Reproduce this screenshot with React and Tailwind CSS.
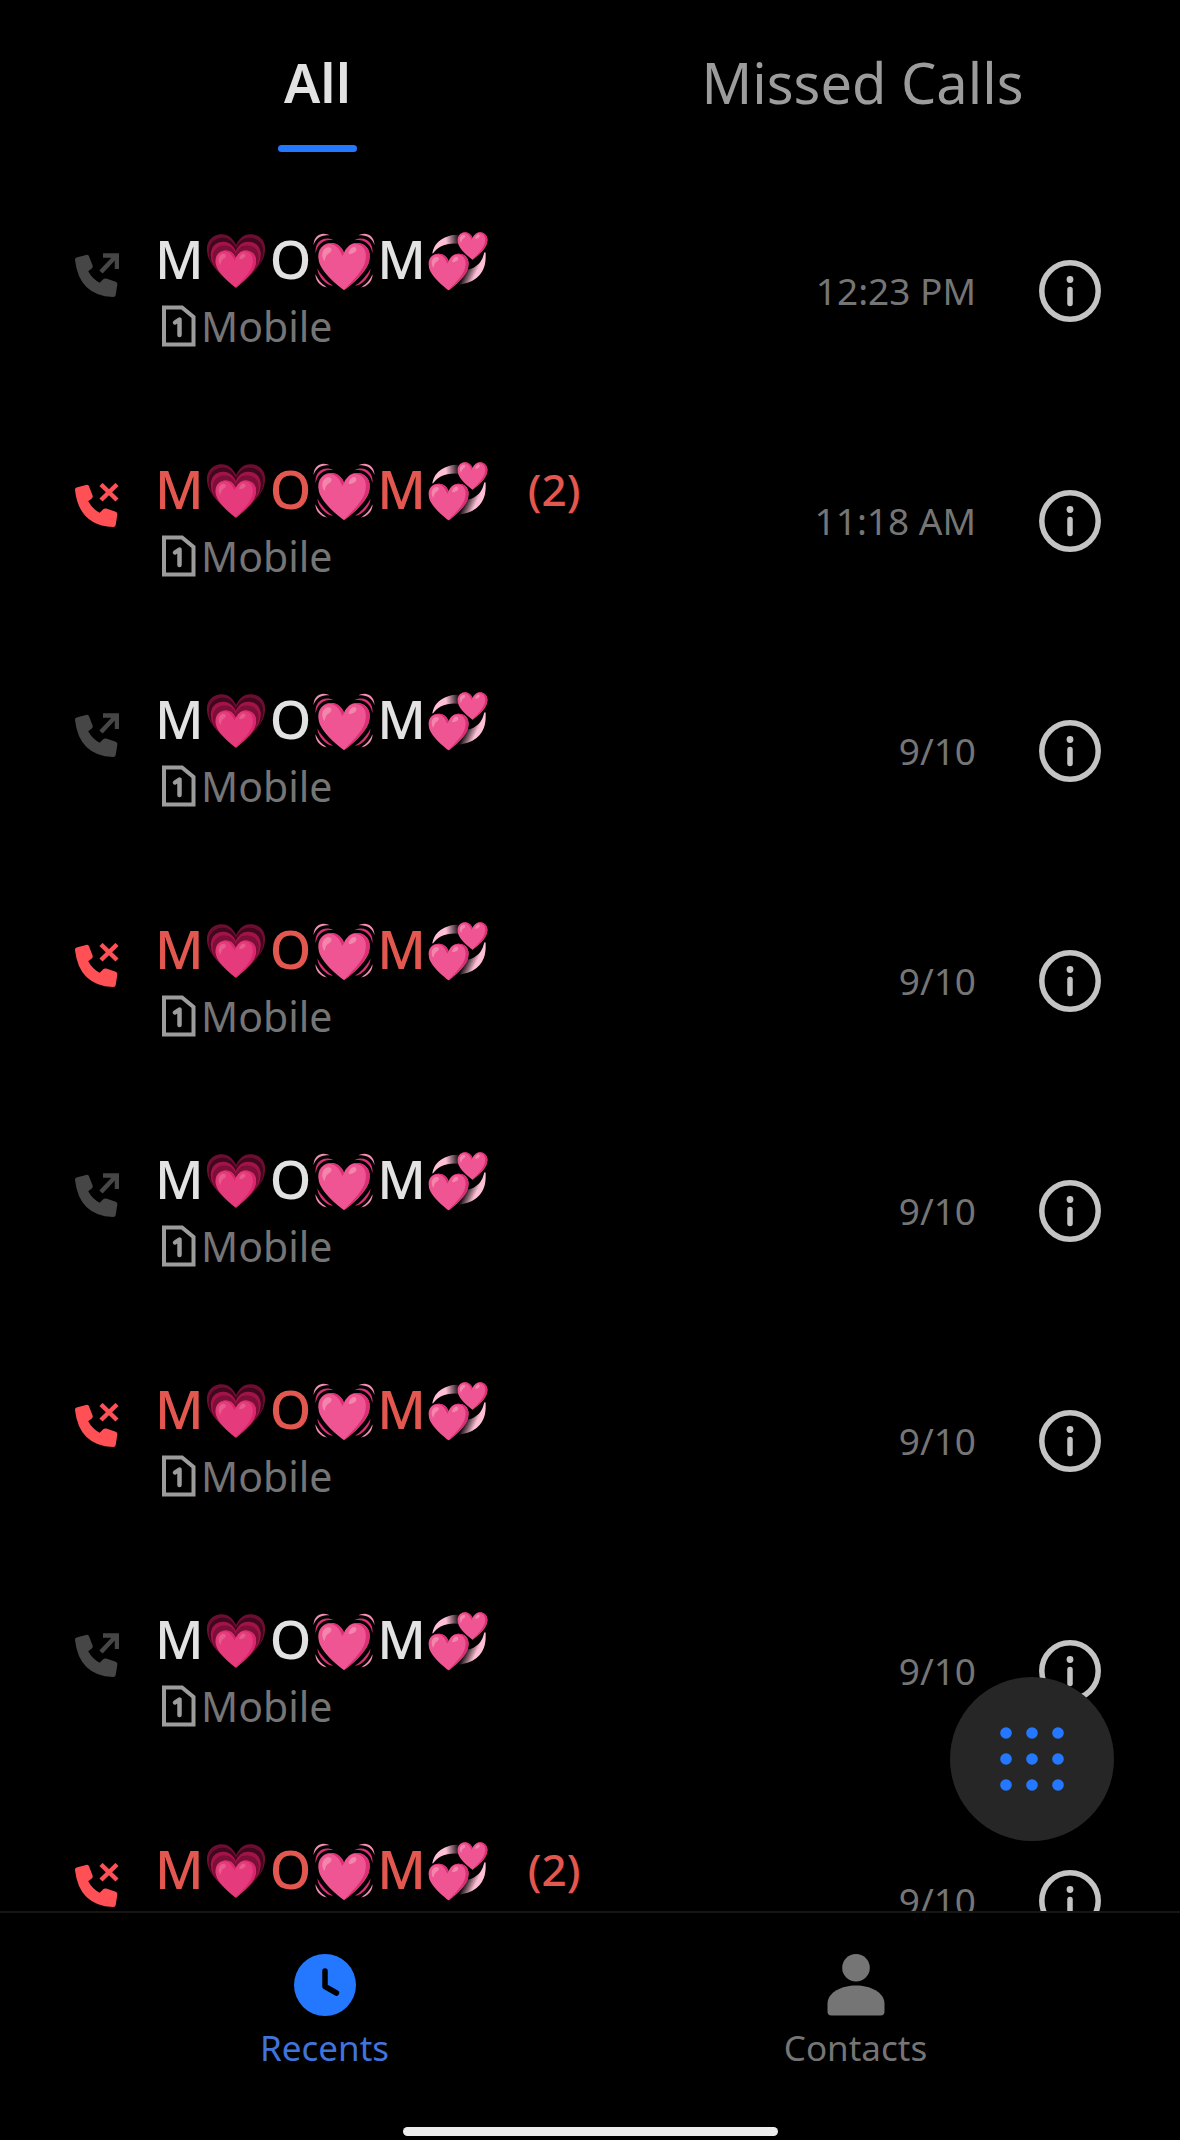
const calls = [
  { missed: false, time: "12:23 PM" },
  { missed: true, count: 2, time: "11:18 AM" },
  { missed: false, time: "9/10" },
  { missed: true, time: "9/10" },
  { missed: false, time: "9/10" },
  { missed: true, time: "9/10" },
  { missed: false, time: "9/10" },
  { missed: true, count: 2, time: "9/10" },
];

function CallIcon({ missed }) {
  return (
    <svg viewBox="0 0 44 46" className={missed ? "h-[46px] w-11 text-[#ff5055]" : "h-[46px] w-11 text-[#464646]"} aria-hidden="true">
      <path
        fill="currentColor"
        d="M1.5 4.5 11 2q2-.6 3 1.300l3.500 9q.8 1.900-.7 3.200l-3.600 2.800q4 7.500 11.500 11.500l3.500-3.500q1.200-1.300 3-.7l9.500 3.200q2 .8 1.600 2.900l-1.600 10.300q-.4 2.300-2.800 2.100Q4 42.500 0 7q-.1-1.900 1.500-2.500z"
      />
      <path
        fill="none"
        stroke="currentColor"
        strokeWidth="4.500"
        d={missed ? "M26 1.500 42 17M42 1.500 26 17" : "M26 19 41 3M28 2.500H42V16"}
      />
    </svg>
  );
}

function SimIcon() {
  return (
    <svg viewBox="0 0 34 42" className="h-[42px] w-[34px]" fill="none" stroke="#9c9c9c" aria-hidden="true">
      <path strokeWidth="4" d="M2 2.500H20L31.500 12V39.500H2z" />
      <path strokeWidth="4.500" strokeLinecap="round" strokeLinejoin="round" d="M13 17.500 17.500 14.500V30" />
    </svg>
  );
}

function InfoIcon() {
  return (
    <svg viewBox="0 0 62 62" className="size-[62px]" fill="none" stroke="#c4c4c4" aria-hidden="true">
      <circle cx="31" cy="31" r="28.200" strokeWidth="5.500" />
      <path d="M31 29.500V43.500" strokeWidth="5.500" strokeLinecap="round" />
      <circle cx="31" cy="19.500" r="3.400" fill="#c4c4c4" stroke="none" />
    </svg>
  );
}

function CallRow({ call }) {
  return (
    <li className="flex h-[230px] shrink-0 pl-[75px] pr-[79px]">
      <div className="w-20 pt-[77px]">
        <CallIcon missed={call.missed} />
      </div>
      <div className="flex-1 pt-[51px]">
        <div className={call.missed ? "flex h-16 gap-9 text-[53px] leading-[64px] font-medium text-[#e2574f]" : "flex h-16 gap-9 text-[53px] leading-[64px] font-medium text-[#e2e2e2]"}>
          <span>M💗O💓M💞</span>
          {call.count && <span className="text-[44px]">({call.count})</span>}
        </div>
        <div className="mt-[7px] flex items-center gap-[5px] pl-[7px] text-[41px] leading-[56px] text-[#757575]">
          <SimIcon />
          <span>Mobile</span>
        </div>
      </div>
      <div className="flex items-center gap-[63px] text-[37px] text-[#757575]">
        <time>{call.time}</time>
        <button type="button" aria-label="Call details">
          <InfoIcon />
        </button>
      </div>
    </li>
  );
}

export default function App() {
  return (
    <div className="relative flex h-screen flex-col overflow-hidden bg-black font-['Noto_Sans','Noto_Color_Emoji',sans-serif]">
      <header className="flex h-[176px] shrink-0 px-[45px] pt-[46px] leading-[72px]">
        <button type="button" className="flex flex-1 flex-col items-center gap-[27px] text-[54px] font-semibold text-[#e2e2e2]">
          <span>All</span>
          <span className="h-[7px] w-[79px] rounded-full bg-[#2478ff]" />
        </button>
        <button type="button" className="flex flex-1 flex-col items-center text-[56px] text-[#9c9c9c]">
          Missed Calls
        </button>
      </header>

      <ul className="flex min-h-0 flex-1 flex-col overflow-hidden">
        {calls.map((call, i) => (
          <CallRow key={i} call={call} />
        ))}
      </ul>

      <button type="button" aria-label="Dial pad" className="absolute right-[66px] bottom-[299px] flex size-[164px] items-center justify-center rounded-full bg-[#262626]">
        <svg viewBox="0 0 66 64" className="h-16 w-[66px]" fill="#2478ff" aria-hidden="true">
          {[6, 32, 58].map((y) => [7, 33, 59].map((x) => <circle key={x + "-" + y} cx={x} cy={y} r="5.800" />))}
        </svg>
      </button>

      <nav className="flex shrink-0 flex-col border-t-2 border-[#161616] pb-1">
        <div className="flex px-[59px] pt-[41px] text-[35px] leading-[46px]">
          <a href="#recents" className="flex flex-1 flex-col items-center gap-[9px] text-[#3f74dc]">
            <svg viewBox="0 0 62 62" className="size-[62px]" aria-hidden="true">
              <circle cx="31" cy="31" r="31" fill="#2478ff" />
              <path d="M31 17V32.500L42.500 39" fill="none" stroke="#000" strokeWidth="5.500" strokeLinecap="round" strokeLinejoin="round" />
            </svg>
            Recents
          </a>
          <a href="#contacts" className="flex flex-1 flex-col items-center gap-[9px] text-[#757575]">
            <svg viewBox="0 0 62 62" className="size-[62px]" fill="#757575" aria-hidden="true">
              <circle cx="31" cy="13.800" r="13.800" />
              <path d="M2.500 50C2.500 38 17 31.500 31 31.500S59.500 38 59.500 50V57.500Q59.500 61.500 55.500 61.500H6.500Q2.500 61.500 2.500 57.500z" />
            </svg>
            Contacts
          </a>
        </div>
        <div className="mt-[56px] h-[9px] w-[375px] self-center rounded-full bg-[#ededed]" />
      </nav>
    </div>
  );
}
